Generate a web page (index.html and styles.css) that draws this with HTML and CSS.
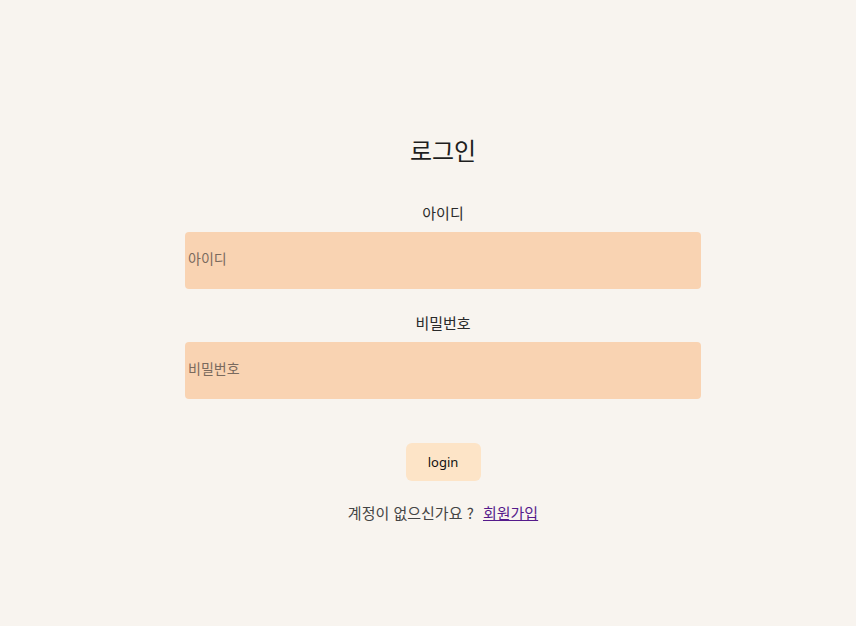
FILE: index.html
```html
<!DOCTYPE html>
<html lang="ko">
<head>
<meta charset="utf-8">
<link rel="stylesheet" href="styles.css">
</head>
<body>
<main class="login">
  <h1 class="title">로그인</h1>
  <form class="form">
    <label class="label" for="id">아이디</label>
    <input class="field" id="id" type="text" placeholder="아이디">
    <label class="label" for="pw">비밀번호</label>
    <input class="field" id="pw" type="password" placeholder="비밀번호">
    <button class="btn" type="button">login</button>
  </form>
  <p class="signup">계정이 없으신가요 ? <a class="link" href="#">회원가입</a></p>
</main>
</body>
</html>
```
FILE: styles.css
```css
html, body {
  margin: 0;
  padding: 0;
  background: #f8f4ef;
}
body {
  font-family: "Noto Sans CJK KR", "Noto Sans", sans-serif;
  color: #222;
}
.login {
  width: 516px;
  margin-left: 185px;
  padding-top: 132px;
  display: flex;
  flex-direction: column;
  align-items: center;
}
.title {
  margin: 0;
  font-size: 24px;
  font-weight: 400;
  line-height: 36px;
  color: #1e1e1e;
}
.form {
  width: 100%;
  display: flex;
  flex-direction: column;
  align-items: center;
  margin-top: 33px;
}
.label {
  font-size: 15px;
  line-height: 24px;
  color: #2a2a2a;
  margin-bottom: 7px;
}
.field {
  box-sizing: border-box;
  width: 100%;
  height: 57px;
  border: none;
  outline: none;
  border-radius: 4px;
  background: #f9d3b2;
  padding: 0 3px 5px;
  font-family: "Noto Sans CJK KR", sans-serif;
  font-size: 14px;
  margin-bottom: 22px;
}
.field::placeholder {
  color: #7a6a5e;
}
.btn {
  margin-top: 22px;
  width: 75px;
  height: 38px;
  border: none;
  border-radius: 6px;
  background: #fde4c7;
  font-family: "Noto Sans", sans-serif;
  font-size: 13px;
  color: #111;
}
.signup {
  margin: 20px 0 0;
  font-size: 15px;
  line-height: 24px;
  color: #444;
}
.link {
  color: #551a8b;
  margin-left: 5px;
}
```
